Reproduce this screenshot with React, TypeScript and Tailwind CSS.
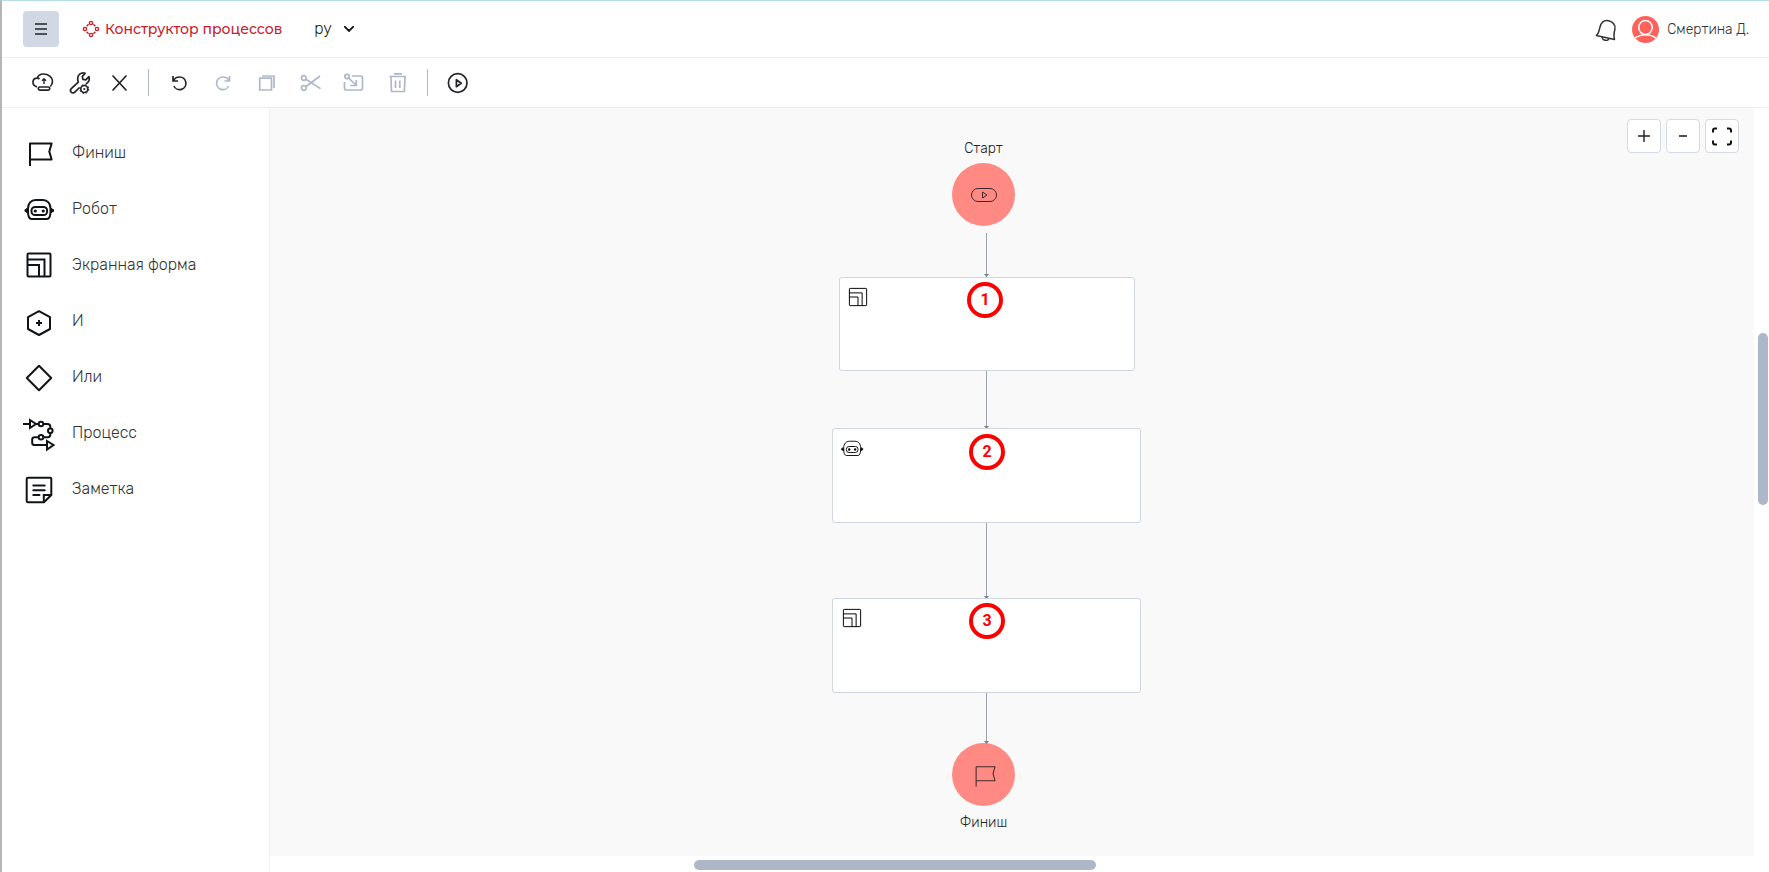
import React, { useState } from 'react';

type IconProps = { className?: string; stroke?: number };

const FlagIcon: React.FC<IconProps> = ({ className = 'size-8', stroke = 2 }) => (
  <svg viewBox="0 0 32 32" className={className} fill="none" stroke="currentColor" strokeWidth={stroke}>
    <path d="M7 29V6.500H28.600L26.300 14.500 28.600 22.500H7" strokeLinejoin="round" />
  </svg>
);

const RobotIcon: React.FC<IconProps> = ({ className = 'size-8', stroke = 2 }) => (
  <svg viewBox="0 0 32 32" className={className} fill="none" stroke="currentColor" strokeWidth={stroke}>
    <path d="M12.5 7h7.4c4.6 0 7.6 3.6 7.6 8.4v3.2c0 4.4-1.2 7.4-3.6 7.4H8.6C6.2 26 5 23 5 18.6v-3.2C5 10.6 8 7 12.5 7z" />
    <rect x="8.5" y="14" width="15.6" height="8" rx="3.6" />
    <circle cx="12.3" cy="18" r="1.6" fill="currentColor" stroke="none" />
    <circle cx="20.2" cy="18" r="1.6" fill="currentColor" stroke="none" />
    <path d="M5 15.5H3.5v1H2v2h1.5v1H5M27.5 15.5H29v1h1.5v2H29v1h-1.5" fill="currentColor" strokeWidth={stroke * 0.5} />
  </svg>
);

const FormIcon: React.FC<IconProps> = ({ className = 'size-8', stroke = 2 }) => (
  <svg viewBox="0 0 32 32" className={className} fill="none" stroke="currentColor" strokeWidth={stroke}>
    <rect x="4.5" y="4.5" width="23" height="23" rx="1" />
    <path d="M4.5 10.5h17v17M4.5 16h11.5v11.5" />
  </svg>
);

const AndIcon: React.FC<IconProps> = ({ className = 'size-8', stroke = 2 }) => (
  <svg viewBox="0 0 32 32" className={className} fill="none" stroke="currentColor" strokeWidth={stroke}>
    <path d="M16 6.2l11 6v11.8l-11 6-11-6V12.2z" strokeLinejoin="round" />
    <path d="M16 15v6M13 18h6" />
  </svg>
);

const OrIcon: React.FC<IconProps> = ({ className = 'size-8', stroke = 2 }) => (
  <svg viewBox="0 0 32 32" className={className} fill="none" stroke="currentColor" strokeWidth={stroke}>
    <path d="M16 4.8L28.2 17 16 29.2 3.8 17z" strokeLinejoin="round" />
  </svg>
);

const ProcessIcon: React.FC<IconProps> = ({ className = 'size-8 overflow-visible', stroke = 2 }) => (
  <svg viewBox="0 0 32 32" className={className} fill="none" stroke="currentColor" strokeWidth={stroke}>
    <path d="M0 7h7M13 7h2.5M7 3l6 4-6 4z" />
    <circle cx="18" cy="7" r="2.3" />
    <path d="M20.3 7h4.2c1.8 0 2.8 1.2 2.8 2.8v1.4" />
    <circle cx="27.3" cy="13.7" r="2.3" />
    <path d="M27.3 16v1.5c0 1.5-1 2.7-2.6 2.7h-4.4" />
    <circle cx="18" cy="20.2" r="2.3" />
    <path d="M15.7 20.2h-4c-1.5 0-2.5 1-2.5 2.3V26c0 1.2.8 2 2 2H23.5M24 24l6.5 4L24 32.5z" />
  </svg>
);

const NoteIcon: React.FC<IconProps> = ({ className = 'size-8', stroke = 2 }) => (
  <svg viewBox="0 0 32 32" className={className} fill="none" stroke="currentColor" strokeWidth={stroke}>
    <path d="M5 4.7h22.3c.6 0 1 .4 1 1V22l-7.3 7.3H5c-.8 0-1.3-.5-1.3-1.3V6c0-.8.5-1.3 1.3-1.3z" />
    <path d="M20.8 29.3V22h7.5" />
    <path d="M10.3 12.4h11.4M10.3 17.2h11.4M10.3 22h6.2" strokeLinecap="round" />
  </svg>
);

const StartIcon: React.FC<IconProps> = ({ className, stroke = 1 }) => (
  <svg viewBox="0 0 28 16" className={className} fill="none" stroke="currentColor" strokeWidth={stroke}>
    <rect x="1.5" y="1.5" width="25" height="13" rx="6.5" />
    <path d="M12.5 5l4.5 3-4.5 3z" />
  </svg>
);

const toolIcons = {
  publish: (
    <>
      <path d="M7 15.8C4.800 15.300 3 13.700 3 11.300 3 8.900 4.800 7.200 7.200 7.200c.9 0 1.700.3 2.300.8M7.200 7.200C8 4.600 10.500 3 13.500 3c4.900 0 9 3.200 9 7.300 0 2-.8 3.900-2.200 5.200" />
      <path d="M14 13V8M12 9.700l2-2 2 2" strokeWidth="1.4" />
      <rect x="8.300" y="16" width="11.500" height="3.200" rx="1.600" />
    </>
  ),
  settings: (
    <>
      <path d="M11.500 16.500l-4.700 4.700c-1 1-2.700 1-3.600 0s-.9-2.500.1-3.500l7-6.500C9.200 7.800 9.700 4.800 11.700 3.200c1.500-1.300 3.500-1.700 5.500-1L14.300 5.400l.6 2.900 2.900.5L21 5.600c.6 2.500.2 4.300-1 5.600-.6.700-1.400 1.200-2.200 1.500" />
      <circle cx="16.300" cy="18" r="3.500" />
      <circle cx="16.300" cy="18" r="1.100" fill="currentColor" stroke="none" />
      <circle cx="16.300" cy="18" r="4.500" strokeWidth="1" strokeDasharray="1.770 1.770" />
    </>
  ),
  close: <path d="M7 5l13 14M20 5L7 19" strokeLinecap="round" />,
  undo: <path d="M6 5v5h5M6.500 9.800C7.600 7.400 9.900 6 12.500 6a6.300 6.300 0 1 1-5.600 9" />,
  redo: <path d="M18.500 5v5h-5M18 9.800C16.900 7.400 14.600 6 12 6a6.300 6.300 0 1 0 5.600 9" />,
  copy: (
    <>
      <rect x="4.700" y="7.200" width="11.800" height="11.800" />
      <path d="M7 5h12v12" />
    </>
  ),
  cut: (
    <>
      <circle cx="4.800" cy="7" r="2.300" />
      <circle cx="4.800" cy="17" r="2.300" />
      <path d="M6.800 8.200L21.500 17.600M6.800 15.800L21 5" />
    </>
  ),
  paste: (
    <>
      <circle cx="4" cy="5.500" r="2.200" />
      <path d="M9 5h8.500c1.200 0 2 .8 2 2v10c0 1.200-.8 2-2 2h-14c-1.200 0-2-.8-2-2v-6M5.500 7l7.500 7M13.300 9v5.500h-6" />
    </>
  ),
  remove: (
    <>
      <path d="M2.500 5.500h16.500M7 2.800h8M4 5.500l.4 15h13L18 5.500" />
      <path d="M8.500 9.500v7.500M12.800 9.500v7.500" />
    </>
  ),
  run: (
    <>
      <circle cx="11.700" cy="12" r="9.300" />
      <path d="M10.400 8.700l4.800 3.500-4.800 3.500z" />
    </>
  ),
};

interface ToolButtonProps {
  name: keyof typeof toolIcons;
  title: string;
  disabled?: boolean;
}

const ToolButton: React.FC<ToolButtonProps> = ({ name, title, disabled }) => (
  <button
    aria-label={title}
    disabled={disabled}
    className="size-6 text-[#222427] disabled:text-[#aeb8ca]"
  >
    <svg viewBox="0 0 24 24" className="size-6" fill="none" stroke="currentColor" strokeWidth="1.7" strokeLinejoin="round">
      {toolIcons[name]}
    </svg>
  </button>
);

const paletteItems = [
  { label: 'Финиш', Icon: FlagIcon },
  { label: 'Робот', Icon: RobotIcon },
  { label: 'Экранная форма', Icon: FormIcon },
  { label: 'И', Icon: AndIcon },
  { label: 'Или', Icon: OrIcon },
  { label: 'Процесс', Icon: ProcessIcon },
  { label: 'Заметка', Icon: NoteIcon },
];

const Header: React.FC = () => {
  const [lang, setLang] = useState('ру');

  return (
    <header className="flex h-[57px] items-center border-b border-[#efefef] pl-[21px] pr-5">
      <button aria-label="Меню" className="flex size-9 items-center justify-center rounded bg-[#d1d8e3]">
        <svg viewBox="0 0 12 12" className="size-3" stroke="#222427" strokeWidth="1.4">
          <path d="M0 1h12M0 6h12M0 11h12" />
        </svg>
      </button>
      <a href="#" className="ml-6 flex items-center gap-[6px] font-['Montserrat','Open_Sans',sans-serif] text-sm font-medium text-[#c8202b]">
        <svg viewBox="0 0 16 16" className="size-4 overflow-visible" fill="none" stroke="currentColor" strokeWidth="1.4">
          <circle cx="8" cy="2" r="1.600" />
          <circle cx="8" cy="14" r="1.600" />
          <circle cx="2" cy="8" r="1.600" />
          <circle cx="14" cy="8" r="1.600" />
          <path d="M5.600 3.200L3.600 5.200M10.400 3.200L12.400 5.200M5.600 12.800L3.600 10.800M10.400 12.800L12.400 10.800" />
        </svg>
        Конструктор процессов
      </a>
      <label className="relative ml-8 flex items-center">
        <select
          aria-label="Язык"
          value={lang}
          onChange={(e) => setLang(e.target.value)}
          className="w-10 appearance-none bg-transparent text-base font-light text-[#222]"
        >
          <option>ру</option>
          <option>en</option>
        </select>
        <svg viewBox="0 0 10 6" className="pointer-events-none absolute right-0 h-[6px] w-[10px]" fill="none" stroke="#111" strokeWidth="1.8">
          <path d="M.7.700L5 5 9.300.700" strokeLinecap="round" />
        </svg>
      </label>
      <div className="ml-auto flex items-center">
        <button aria-label="Уведомления" className="size-6">
          <svg viewBox="0 0 24 24" className="size-6" fill="none" stroke="#333" strokeWidth="1.5" strokeLinejoin="round">
            <path d="M2.300 18.500c1.700-1.500 2.300-2.500 2.800-5l.9-3.500C7.200 5.500 10.500 3 14.700 3.800s7 4.300 6.200 8.400l-.7 3.500c-.5 2.500-.4 4.300.3 6.800z" />
            <path d="M8 19.800c.2 2 1.400 3.200 3.200 3.500 1.700.3 3.300-.4 4-2.100" />
          </svg>
        </button>
        <button className="ml-[13px] flex items-center gap-2 text-sm font-light text-[#333]">
          <svg viewBox="0 0 28 28" className="size-7">
            <circle cx="14.500" cy="14.500" r="13.500" fill="#ff625c" />
            <ellipse cx="14.500" cy="12.500" rx="6.700" ry="7" fill="none" stroke="#fff" strokeWidth="1.5" />
            <path d="M4 23c6-4.500 15-4.500 21 0" fill="none" stroke="#fff" strokeWidth="1.5" />
          </svg>
          <span className="pt-0.5">Смертина Д.</span>
        </button>
      </div>
    </header>
  );
};

const Toolbar: React.FC = () => (
  <div className="flex h-[50px] items-center border-b border-[#efefef] pl-7">
    <div className="flex gap-[14px]">
      <ToolButton name="publish" title="Опубликовать" />
      <ToolButton name="settings" title="Настройки" />
      <ToolButton name="close" title="Закрыть" />
    </div>
    <div className="mx-[18px] h-[27px] w-px bg-[#aeb8ca]" />
    <div className="flex gap-5">
      <ToolButton name="undo" title="Отменить" />
      <ToolButton name="redo" title="Повторить" disabled />
      <ToolButton name="copy" title="Копировать" disabled />
      <ToolButton name="cut" title="Вырезать" disabled />
      <ToolButton name="paste" title="Вставить" disabled />
      <ToolButton name="remove" title="Удалить" disabled />
    </div>
    <div className="ml-4 mr-[18px] h-[27px] w-px bg-[#aeb8ca]" />
    <ToolButton name="run" title="Запустить" />
  </div>
);

const Badge: React.FC<{ n: number; className: string }> = ({ n, className }) => (
  <span
    className={`absolute flex size-9 items-center justify-center rounded-full border-4 border-[#fe0000] bg-white font-['Roboto',sans-serif] text-base font-bold text-[#fe0000] ${className}`}
  >
    {n}
  </span>
);

const Arrow: React.FC<{ className: string }> = ({ className }) => (
  <div className={`absolute left-[716px] w-px bg-[#9aa3ad] ${className}`}>
    <svg viewBox="0 0 5 3" className="absolute -left-0.5 bottom-0 h-[3px] w-[5px]">
      <path d="M0 0h5L2.500 3z" fill="#748090" />
    </svg>
  </div>
);

// Node coordinates are relative to the top-left corner of the canvas
const Canvas: React.FC = () => (
  <main className="relative min-w-0 flex-1 overflow-hidden bg-[#f9f9f9]">
    <span className="absolute left-[682px] top-[31px] w-[63px] text-center text-sm leading-5 font-light text-[#222]">Старт</span>
    <div className="absolute left-[682px] top-[55px] flex size-[63px] items-center justify-center rounded-full bg-[#ff8a84] text-[#43282a]">
      <StartIcon className="h-4 w-7" />
    </div>
    <Arrow className="top-[125px] h-[44px]" />

    <div className="absolute left-[569px] top-[169px] h-[94px] w-[296px] rounded-[3px] border border-[#d0d6e0] bg-white">
      <FormIcon className="ml-[6px] mt-[7px] size-6" stroke={1.3} />
      <Badge n={1} className="left-[127px] top-1" />
    </div>
    <Arrow className="top-[263px] h-[58px]" />

    <div className="absolute left-[562px] top-[320px] h-[95px] w-[309px] rounded-[3px] border border-[#d0d6e0] bg-white">
      <RobotIcon className="ml-[7px] mt-[7px] size-6" stroke={1.2} />
      <Badge n={2} className="left-[136px] top-[5px]" />
    </div>
    <Arrow className="top-[415px] h-[76px]" />

    <div className="absolute left-[562px] top-[490px] h-[95px] w-[309px] rounded-[3px] border border-[#d0d6e0] bg-white">
      <FormIcon className="ml-[7px] mt-[7px] size-6" stroke={1.3} />
      <Badge n={3} className="left-[136px] top-1" />
    </div>
    <div className="absolute left-[682px] top-[635px] flex size-[63px] items-center justify-center rounded-full bg-[#ff8a84] text-[#43282a]">
      <FlagIcon className="size-7" stroke={1.2} />
    </div>
    <Arrow className="top-[585px] h-[51px]" />
    <span className="absolute left-[682px] top-[705px] w-[63px] text-center text-sm leading-5 font-light text-[#222]">Финиш</span>

    <div className="absolute right-[15px] top-[11px] flex gap-[5px] text-[#222]">
      <button aria-label="Увеличить" className="flex size-[34px] items-center justify-center rounded border border-[#d5dae4] bg-white">
        <svg viewBox="0 0 12 12" className="size-3" stroke="currentColor" strokeWidth="1.4">
          <path d="M6 0v12M0 6h12" />
        </svg>
      </button>
      <button aria-label="Уменьшить" className="flex size-[34px] items-center justify-center rounded border border-[#d5dae4] bg-white">
        <svg viewBox="0 0 12 12" className="size-3" stroke="currentColor" strokeWidth="1.6">
          <path d="M2 6h8" />
        </svg>
      </button>
      <button aria-label="На весь экран" className="flex size-[34px] items-center justify-center rounded border border-[#d5dae4] bg-white">
        <svg viewBox="0 0 20 20" className="size-5" fill="none" stroke="#111" strokeWidth="2">
          <path d="M1 6.500V4.500q0-2 2-2h2M15 2.500h2q2 0 2 2v2M19 14.500v2q0 2-2 2h-2M5 18.500H3q-2 0-2-2v-2" />
        </svg>
      </button>
    </div>
  </main>
);

const App: React.FC = () => {
  return (
    <div className="flex h-screen flex-col border-l-2 border-t border-l-[#b5b5b5] border-t-[#b5dfe3] bg-white font-['Rubik','Roboto',sans-serif]">
      <Header />
      <Toolbar />
      <div className="flex min-h-0 flex-1">
        <aside className="w-[268px] shrink-0 border-r border-[#efefef] pt-[17px]">
          <ul>
            {paletteItems.map(({ label, Icon }) => (
              <li key={label}>
                <button className="flex h-14 w-full items-center gap-[17px] pl-[21px] text-[#111417]">
                  <Icon />
                  <span className="text-base font-light text-[#333]">{label}</span>
                </button>
              </li>
            ))}
          </ul>
        </aside>
        <div className="flex min-w-0 flex-1 flex-col">
          <div className="flex min-h-0 flex-1">
            <Canvas />
            <div className="flex w-[15px] flex-col pl-1 pr-px">
              <div className="flex-[225]" />
              <div className="flex-[172] rounded-full bg-[#aeb7c8]" />
              <div className="flex-[351]" />
            </div>
          </div>
          <div className="flex h-4 pb-0.5 pr-[15px] pt-1">
            <div className="flex-[424]" />
            <div className="flex-[402] rounded-full bg-[#aeb7c8]" />
            <div className="flex-[658]" />
          </div>
        </div>
      </div>
    </div>
  );
};

export default App;
